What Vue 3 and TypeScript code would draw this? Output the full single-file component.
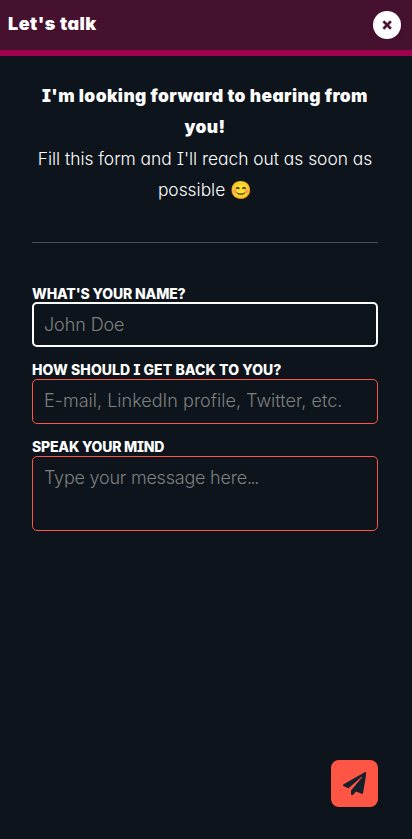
<script setup lang="ts">
import { onMounted, ref } from 'vue'

const name = ref('')
const contact = ref('')
const message = ref('')
const nameInput = ref<HTMLInputElement | null>(null)

onMounted(() => nameInput.value?.focus())
</script>

<template>
  <section class="dialog">
    <header class="bar">
      <h1 class="title">Let's talk</h1>
      <button class="close" type="button">
        <svg class="close-icon" viewBox="0 0 352 512">
          <path fill="currentColor" stroke="currentColor" stroke-width="24" d="M242.72 256l100.07-100.07c12.28-12.28 12.28-32.19 0-44.48l-22.24-22.24c-12.28-12.28-32.19-12.28-44.48 0L176 189.28 75.93 89.21c-12.28-12.28-32.19-12.28-44.48 0L9.21 111.45c-12.28 12.28-12.28 32.19 0 44.48L109.28 256 9.21 356.07c-12.28 12.28-12.28 32.19 0 44.48l22.24 22.24c12.28 12.28 32.2 12.28 44.48 0L176 322.72l100.07 100.07c12.28 12.28 32.2 12.28 44.48 0l22.24-22.24c12.28-12.28 12.28-32.19 0-44.48L242.72 256z" />
        </svg>
      </button>
    </header>
    <form class="form" @submit.prevent>
      <div class="intro">
        <strong>I'm looking forward to hearing from you!</strong>
        <p>Fill this form and I'll reach out as soon as possible 😊</p>
      </div>
      <label class="field">
        <span class="label label-name">What's your name?</span>
        <input ref="nameInput" v-model="name" class="control name" type="text" placeholder="John Doe" />
      </label>
      <label class="field">
        <span class="label label-contact">How should I get back to you?</span>
        <input v-model="contact" class="control contact" type="text" placeholder="E-mail, LinkedIn profile, Twitter, etc." />
      </label>
      <label class="field">
        <span class="label label-message">Speak your mind</span>
        <span class="stack">
          <textarea v-model="message" class="control area"></textarea>
          <span v-if="!message" class="hint">Type your message here<span class="dots">...</span></span>
        </span>
      </label>
      <button class="send" type="submit">
        <svg class="send-icon" viewBox="0 0 512 512">
          <path fill="currentColor" d="M476 3.2L12.5 270.6c-18.1 10.4-15.8 35.6 2.2 43.2L121 358.4l287.3-253.2c5.5-4.9 13.3 2.6 8.6 8.3L176 407v80.5c0 23.6 28.5 32.9 42.5 15.8L282 426l124.6 52.2c14.2 6 30.4-2.9 33-18.2l72-432C515 7.8 493.3-6.8 476 3.2z" />
        </svg>
      </button>
    </form>
  </section>
</template>

<style>
body {
  background: #0d141b;
}
</style>

<style scoped>
.dialog {
  display: flex;
  flex-direction: column;
  box-sizing: border-box;
  height: 100vh;
  background: #0d141b;
  color: #fff;
  font-family: Inter, sans-serif;
  font-size: 17.4px;
  font-feature-settings: 'cv08', 'cv11';
}
.bar {
  display: flex;
  align-items: center;
  justify-content: space-between;
  box-sizing: border-box;
  flex: none;
  height: 56px;
  padding: 0 11px 0 8px;
  background: #46112f;
  border-bottom: 6px solid #9d014d;
}
.title {
  margin: 0 0 3px;
  font-size: 18px;
  line-height: 24px;
  font-weight: 900;
  letter-spacing: 0.5px;
}
.close {
  display: flex;
  align-items: center;
  justify-content: center;
  width: 28px;
  height: 28px;
  padding: 0;
  border: 0;
  border-radius: 50%;
  background: #fff;
  color: #46112f;
  box-shadow: 0 1px 5px rgba(0, 0, 0, 0.15);
}
.close-icon {
  width: 8.25px;
  height: 12px;
  overflow: visible;
}
.form {
  display: flex;
  flex-direction: column;
  flex: 1;
  padding: 24px 34px 32px 32px;
}
.intro {
  box-sizing: border-box;
  height: 163px;
  margin-bottom: 43px;
  border-bottom: 1px solid #4c4e55;
  line-height: 31.33px;
  text-align: center;
}
.intro strong {
  display: block;
  font-weight: 900;
  letter-spacing: 0.4px;
}
.intro p {
  margin: 0;
  font-weight: 300;
  letter-spacing: -0.01px;
}
.field {
  display: flex;
  flex-direction: column;
  margin-bottom: 15px;
}
.label {
  height: 17px;
  font-size: 14px;
  line-height: 16px;
  font-weight: 800;
  text-transform: uppercase;
}
.label-name {
  height: 16px;
  letter-spacing: -0.15px;
}
.label-contact {
  letter-spacing: 0.08px;
}
.label-message {
  letter-spacing: -0.2px;
}
.control {
  box-sizing: border-box;
  height: 45px;
  padding: 0 11px;
  border: 1px solid #ff5545;
  border-radius: 5px;
  outline: none;
  background: transparent;
  color: #fff;
  caret-color: transparent;
  font: 300 18px Inter, sans-serif;
}
.control::placeholder {
  color: #808080;
}
.control:focus {
  padding: 0 10px;
  border: 2px solid #fff;
}
.name {
  letter-spacing: -0.1px;
}
.contact {
  padding-bottom: 2px;
  letter-spacing: 0.02px;
}
.stack {
  display: grid;
}
.area,
.hint {
  grid-area: 1 / 1;
}
.area {
  height: 75px;
  padding-top: 10px;
  resize: none;
}
.hint {
  padding: 11px 12px;
  color: #808080;
  font: 300 18px/22px Inter, sans-serif;
  font-feature-settings: normal;
  letter-spacing: -0.22px;
  pointer-events: none;
}
.dots {
  letter-spacing: -1.4px;
}
.send {
  display: flex;
  align-items: center;
  justify-content: center;
  align-self: flex-end;
  width: 47px;
  height: 47px;
  margin-top: auto;
  padding: 0;
  border: 0;
  border-radius: 8px;
  background: #ff5545;
  color: #17202a;
}
.send-icon {
  width: 23.4px;
  height: 23.4px;
}
</style>
